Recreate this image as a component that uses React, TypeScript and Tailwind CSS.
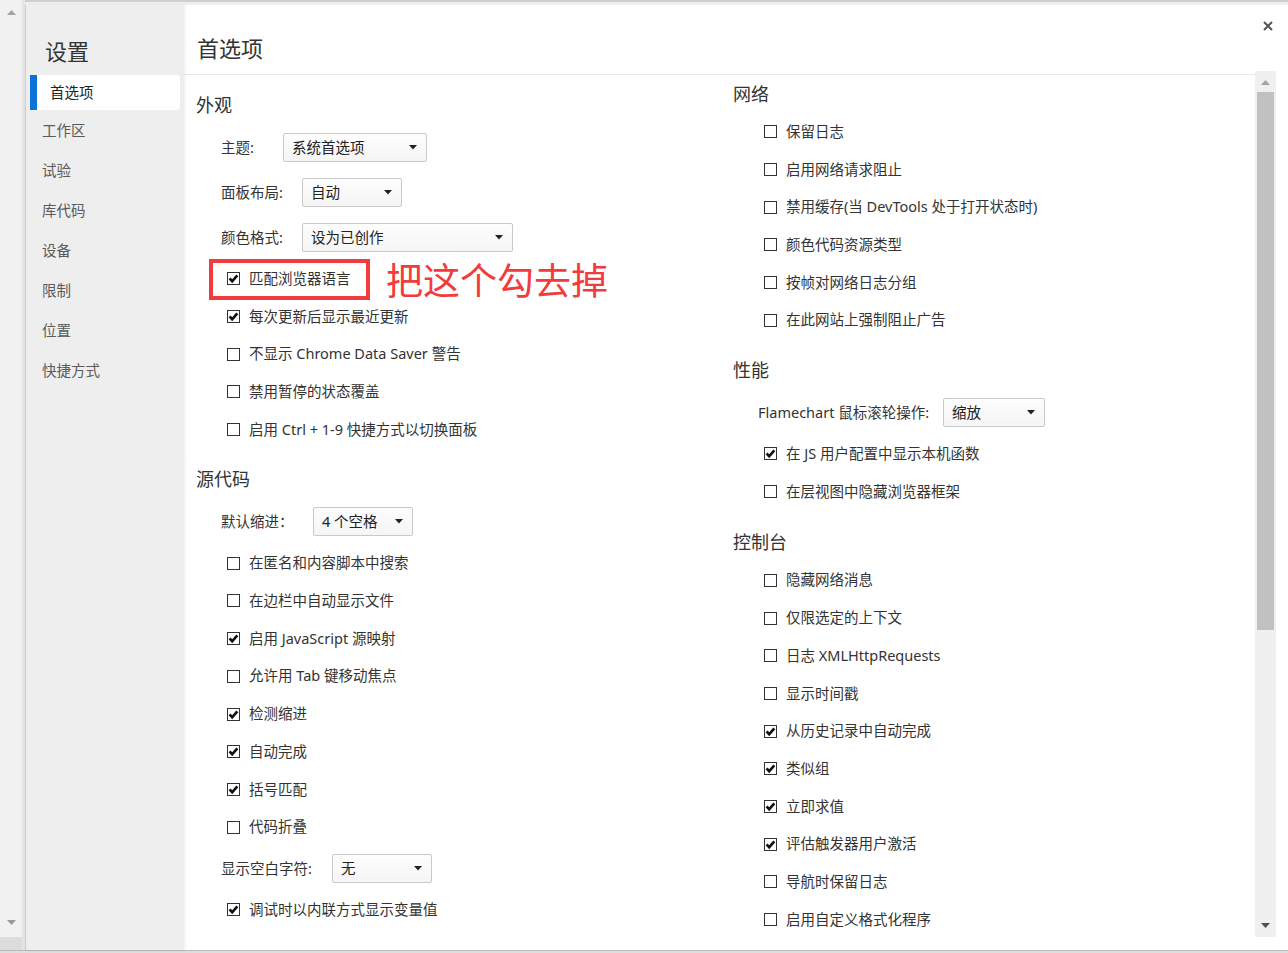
import React from "react";

type Item =
  | { t: "h"; text: string; first?: "left" | "right" }
  | { t: "s"; label: string; lw: number; sw: number; value: string }
  | { t: "c"; text: string; checked: boolean; annotate?: boolean };

const left: Item[] = [
  { t: "h", text: "外观", first: "left" },
  { t: "s", label: "主题:", lw: 62, sw: 144, value: "系统首选项" },
  { t: "s", label: "面板布局:", lw: 81, sw: 100, value: "自动" },
  { t: "s", label: "颜色格式:", lw: 81, sw: 211, value: "设为已创作" },
  { t: "c", text: "匹配浏览器语言", checked: true, annotate: true },
  { t: "c", text: "每次更新后显示最近更新", checked: true },
  { t: "c", text: "不显示 Chrome Data Saver 警告", checked: false },
  { t: "c", text: "禁用暂停的状态覆盖", checked: false },
  { t: "c", text: "启用 Ctrl + 1-9 快捷方式以切换面板", checked: false },
  { t: "h", text: "源代码" },
  { t: "s", label: "默认缩进：", lw: 92, sw: 100, value: "4 个空格" },
  { t: "c", text: "在匿名和内容脚本中搜索", checked: false },
  { t: "c", text: "在边栏中自动显示文件", checked: false },
  { t: "c", text: "启用 JavaScript 源映射", checked: true },
  { t: "c", text: "允许用 Tab 键移动焦点", checked: false },
  { t: "c", text: "检测缩进", checked: true },
  { t: "c", text: "自动完成", checked: true },
  { t: "c", text: "括号匹配", checked: true },
  { t: "c", text: "代码折叠", checked: false },
  { t: "s", label: "显示空白字符:", lw: 111, sw: 100, value: "无" },
  { t: "c", text: "调试时以内联方式显示变量值", checked: true },
];

const right: Item[] = [
  { t: "h", text: "网络", first: "right" },
  { t: "c", text: "保留日志", checked: false },
  { t: "c", text: "启用网络请求阻止", checked: false },
  { t: "c", text: "禁用缓存(当 DevTools 处于打开状态时)", checked: false },
  { t: "c", text: "颜色代码资源类型", checked: false },
  { t: "c", text: "按帧对网络日志分组", checked: false },
  { t: "c", text: "在此网站上强制阻止广告", checked: false },
  { t: "h", text: "性能" },
  { t: "s", label: "Flamechart 鼠标滚轮操作:", lw: 185, sw: 102, value: "缩放" },
  { t: "c", text: "在 JS 用户配置中显示本机函数", checked: true },
  { t: "c", text: "在层视图中隐藏浏览器框架", checked: false },
  { t: "h", text: "控制台" },
  { t: "c", text: "隐藏网络消息", checked: false },
  { t: "c", text: "仅限选定的上下文", checked: false },
  { t: "c", text: "日志 XMLHttpRequests", checked: false },
  { t: "c", text: "显示时间戳", checked: false },
  { t: "c", text: "从历史记录中自动完成", checked: true },
  { t: "c", text: "类似组", checked: true },
  { t: "c", text: "立即求值", checked: true },
  { t: "c", text: "评估触发器用户激活", checked: true },
  { t: "c", text: "导航时保留日志", checked: false },
  { t: "c", text: "启用自定义格式化程序", checked: false },
];

function Check({ checked }: { checked: boolean }) {
  return (
    <svg width="13" height="13" viewBox="0 0 13 13" className="shrink-0">
      <rect x="0.5" y="0.5" width="12" height="12" fill="white" stroke="#333" />
      {checked && (
        <path d="M2.6 6.3 L5.2 9.3 L10.3 3.3" fill="none" stroke="#111" strokeWidth="2.7" />
      )}
    </svg>
  );
}

function Row({ item }: { item: Item }) {
  if (item.t === "h") {
    const cls =
      item.first === "right"
        ? "pt-[7px] pb-[7px]"
        : item.first === "left"
        ? "pt-[18px] pb-[8px]"
        : "pt-[19px] pb-[8px]";
    return (
      <div className={`${cls} text-[18px] leading-[24px] text-[#333]`}>{item.text}</div>
    );
  }
  if (item.t === "s") {
    return (
      <div className="h-[45px] flex items-center pl-[25px]">
        <div className="shrink-0 text-[#333]" style={{ width: item.lw }}>
          {item.label}
        </div>
        <div
          className="h-[29px] flex items-center justify-between pl-[8px] pr-[9px] border border-[#c9c9c9] rounded-[2px] bg-gradient-to-b from-[#fdfdfd] to-[#f5f5f5] text-[#222]"
          style={{ width: item.sw }}
        >
          <span>{item.value}</span>
          <svg width="8" height="5" viewBox="0 0 8 5">
            <path d="M0 0 L8 0 L4 4.5 Z" fill="#222" />
          </svg>
        </div>
      </div>
    );
  }
  return (
    <div className="relative h-[37.7px] flex items-center pl-[31px] gap-[9px] text-[#333]">
      <Check checked={item.checked} />
      <span className="whitespace-nowrap">{item.text}</span>
      {item.annotate && (
        <>
          <div className="absolute left-[13px] top-[-1px] w-[161px] h-[41px] border-[4px] border-[#f03c3c]" />
          <div className="absolute left-[190px] top-[-2px] text-[37px] leading-[42px] text-[#f23b3b] whitespace-nowrap font-['Noto_Sans_CJK_SC',sans-serif]">
            把这个勾去掉
          </div>
        </>
      )}
    </div>
  );
}

export default function App() {
  return (
    <div className="w-[1288px] h-[953px] overflow-hidden flex flex-col bg-[#f0f0f0] text-[14.5px] font-['Noto_Sans','Noto_Sans_CJK_SC',sans-serif]">
      <div className="h-[2px] bg-[#cfcfcf] shrink-0" />
      <div className="h-[3px] bg-[#efefef] shrink-0" />
      <div className="flex h-[945px] shrink-0">
        {/* left strip */}
        <div className="w-[22px] flex flex-col items-center justify-between bg-[#f1f1f1] -mt-[5px] pt-[10px] pb-[0px]">
          <svg width="9" height="5" viewBox="0 0 9 5">
            <path d="M0 5 L4.5 0 L9 5 Z" fill="#a3a3a3" />
          </svg>
          <div className="flex flex-col items-center w-full">
            <svg width="9" height="5" viewBox="0 0 9 5" className="mb-[12px]">
              <path d="M0 0 L9 0 L4.5 5 Z" fill="#9a9a9a" />
            </svg>
            <div className="w-full h-[13px] bg-[#dcdcdc]" />
          </div>
        </div>
        <div className="w-[3px] bg-[#e4e4e4] -mt-[5px]" />
        {/* modal */}
        <div className="flex-1 flex bg-white border-l border-[#cfcfcf]">
          {/* sidebar */}
          <div className="w-[158px] shrink-0 bg-[#eeeeee] shadow-[1px_0_3px_rgba(0,0,0,0.08)] relative z-10">
            <div className="pt-[31px] pl-[19px] text-[22px] leading-[30px] text-[#333]">设置</div>
            <div className="mt-[9px] ml-[4px] w-[150px] h-[35px] bg-white rounded-r-[3px] flex items-center">
              <div className="w-[7px] h-full bg-[#0b72d7]" />
              <span className="pl-[13px] text-[#222]">首选项</span>
            </div>
            {["工作区", "试验", "库代码", "设备", "限制", "位置", "快捷方式"].map((s) => (
              <div key={s} className="h-[40px] flex items-center pl-[16px] pt-[1px] text-[#5a5a5a]">
                {s}
              </div>
            ))}
          </div>
          {/* content */}
          <div className="flex-1 flex flex-col">
            <div className="h-[66px] shrink-0 flex items-start justify-between pl-[13px]">
              <div className="pt-[28px] text-[22px] leading-[30px] text-[#333]">首选项</div>
              <svg width="10" height="10" viewBox="0 0 10 10" className="mt-[16px] mr-[15px]">
                <path d="M1 1 L9 9 M9 1 L1 9" stroke="#555" strokeWidth="2" />
              </svg>
            </div>
            <div className="h-[866px] shrink-0 flex">
              <div className="flex-1 mt-[3px] border-t border-[#e9e9e9] flex overflow-hidden">
                <div className="w-[537px] shrink-0 pl-[12px]">
                  {left.map((it, i) => (
                    <Row key={i} item={it} />
                  ))}
                </div>
                <div className="flex-1 pl-[12px]">
                  {right.map((it, i) => (
                    <Row key={i} item={it} />
                  ))}
                </div>
              </div>
              <div className="w-[21px] shrink-0 bg-[#f0f0f0] flex flex-col items-center">
                <svg width="9" height="5" viewBox="0 0 9 5" className="mt-[9px]">
                  <path d="M0 5 L4.5 0 L9 5 Z" fill="#a3a3a3" />
                </svg>
                <div className="mt-[7px] w-[17px] h-[538px] bg-[#c1c1c1]" />
                <div className="flex-1" />
                <svg width="9" height="5" viewBox="0 0 9 5" className="mb-[9px]">
                  <path d="M0 0 L9 0 L4.5 5 Z" fill="#505050" />
                </svg>
              </div>
              <div className="w-[12px] shrink-0" />
            </div>
          </div>
        </div>
      </div>
      <div className="h-[1px] bg-[#b9b9b9] shrink-0" />
      <div className="flex-1 bg-[#dedede]" />
    </div>
  );
}
